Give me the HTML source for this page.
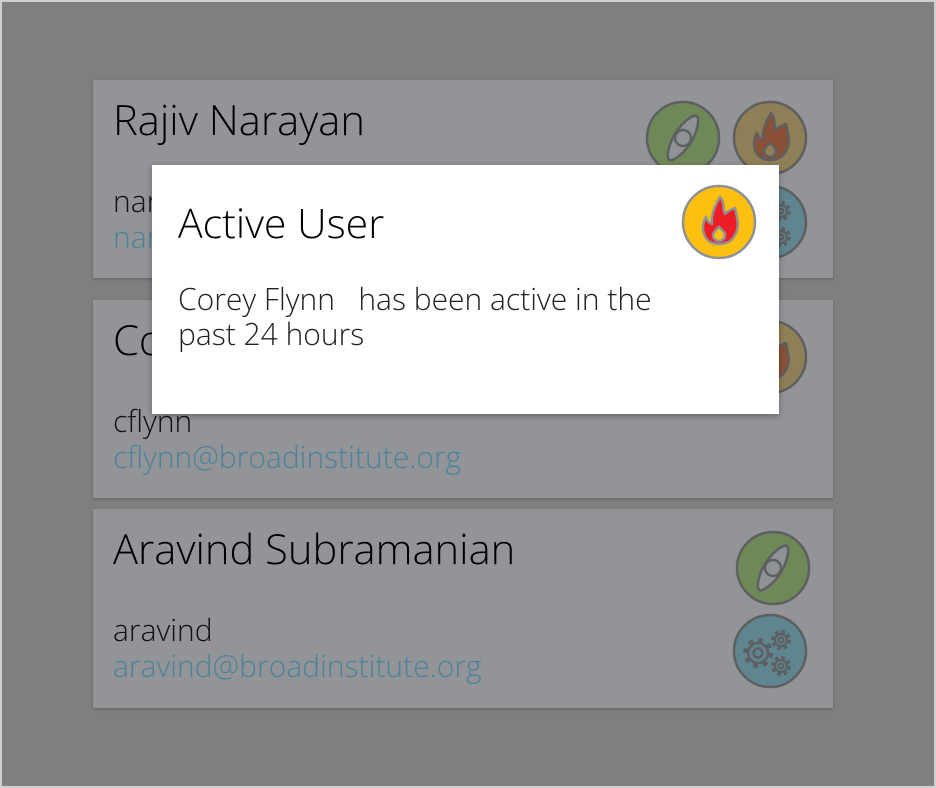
<!DOCTYPE html>
<html><head><meta charset="utf-8"><style>
html,body{margin:0;padding:0}
body{width:936px;height:788px;position:relative;overflow:hidden;background:#d0d0d0;font-family:"Open Sans","Liberation Sans",sans-serif}
.bg{position:absolute;left:2px;top:2px;width:932px;height:784px;background:#7f7f7f}
.card{position:absolute;left:93px;width:740px;background:#939498;box-shadow:0 1px 3px rgba(0,0,0,.25)}
.name{position:absolute;left:20px;top:11px;font-size:41.7px;color:#000;font-weight:300;white-space:nowrap}
.user{position:absolute;left:20px;font-size:30px;color:#111;font-weight:300}
.mail{position:absolute;left:20px;font-size:30px;color:#4a8399;font-weight:300}
.ic{position:absolute;width:76px;height:76px}
.modal{position:absolute;left:152px;top:165px;width:627px;height:249px;background:#fff;box-shadow:0 2px 6px rgba(0,0,0,.3)}
.mt{position:absolute;left:26px;top:30px;font-size:41px;color:#000;font-weight:300;white-space:nowrap}
.mb{position:absolute;left:26px;top:116px;font-size:30px;line-height:35px;color:#222;font-weight:300;width:480px}
</style></head><body>
<div class="bg"></div>
<svg width="0" height="0" style="position:absolute">
<defs>
<g id="compass"><path d="M38 29 C50 29 60 33 63 36 C64 37 64 39 63 40 C60 43 50 47 38 47 C26 47 16 43 13 40 C12 39 12 37 13 36 C16 33 26 29 38 29 Z" transform="rotate(-58 38 38)" fill="#8e9196" stroke="#5d5f60" stroke-width="2.5"/><circle cx="38" cy="38" r="8" fill="#8e9196" stroke="#5d5f60" stroke-width="2.5"/></g>
<g id="fire" stroke-width="2.5" stroke-linejoin="round"><path d="M39 13 C44 18 41 24 44 30 C47 27 51 25 54 24 C56 34 60 44 52 54 C46 62 30 62 25 54 C20 46 22 38 25 33 C26 37 28 39 31 40 C30 30 34 22 39 13 Z M38 43 C41 46 44 48 44 51 C44 55 41 57 38 57 C35 57 32 55 32 51 C32 48 35 46 38 43 Z" fill-rule="evenodd"/></g>
<g id="gear" fill="none" stroke="#5d5f60">
<circle cx="26" cy="40" r="12.5" stroke-width="5" stroke-dasharray="4.5 5.3"/>
<circle cx="26" cy="40" r="10" stroke-width="2.5"/><circle cx="26" cy="40" r="4.5" stroke-width="2.5"/>
<circle cx="49" cy="27" r="8" stroke-width="4" stroke-dasharray="3.5 2.8"/>
<circle cx="49" cy="27" r="6" stroke-width="2.2"/><circle cx="49" cy="27" r="2.5" stroke-width="2"/>
<circle cx="49" cy="53" r="8" stroke-width="4" stroke-dasharray="3.5 2.8"/>
<circle cx="49" cy="53" r="6" stroke-width="2.2"/><circle cx="49" cy="53" r="2.5" stroke-width="2"/>
</g>
</defs></svg>

<div class="card" style="top:80px;height:198px">
<div class="name">Rajiv Narayan</div>
<div class="user" style="top:100px">narayan</div>
<div class="mail" style="top:136px">narayan@broadinstitute.org</div>
<svg class="ic" style="left:552px;top:20px" viewBox="0 0 76 76"><circle cx="38" cy="38" r="36" fill="#6f8858" stroke="#5d5f60" stroke-width="2.5"/><use href="#compass"/></svg>
<svg class="ic" style="left:639px;top:20px" viewBox="0 0 76 76"><circle cx="38" cy="38" r="36" fill="#8f7f57" stroke="#5d5f60" stroke-width="2.5"/><use href="#fire" fill="#8c4f38" stroke="#5d5f60"/></svg>
<svg class="ic" style="left:639px;top:104px" viewBox="0 0 76 76"><circle cx="38" cy="38" r="36" fill="#5f8690" stroke="#5d5f60" stroke-width="2.5"/><use href="#gear"/></svg>
</div>

<div class="card" style="top:300px;height:198px">
<div class="name">Corey Flynn</div>
<div class="user" style="top:100px">cflynn</div>
<div class="mail" style="top:136px">cflynn@broadinstitute.org</div>
<svg class="ic" style="left:639px;top:19px" viewBox="0 0 76 76"><circle cx="38" cy="38" r="36" fill="#8f7f57" stroke="#5d5f60" stroke-width="2.5"/><use href="#fire" fill="#8c4f38" stroke="#5d5f60"/></svg>
</div>

<div class="card" style="top:509px;height:199px">
<div class="name">Aravind Subramanian</div>
<div class="user" style="top:100px">aravind</div>
<div class="mail" style="top:136px">aravind@broadinstitute.org</div>
<svg class="ic" style="left:642px;top:21px" viewBox="0 0 76 76"><circle cx="38" cy="38" r="36" fill="#6f8858" stroke="#5d5f60" stroke-width="2.5"/><use href="#compass"/></svg>
<svg class="ic" style="left:639px;top:104px" viewBox="0 0 76 76"><circle cx="38" cy="38" r="36" fill="#5f8690" stroke="#5d5f60" stroke-width="2.5"/><use href="#gear"/></svg>
</div>

<div class="modal">
<div class="mt">Active User</div>
<div class="mb">Corey Flynn&nbsp;&nbsp; has been active in the past 24 hours</div>
<svg class="ic" style="left:529px;top:19px" viewBox="0 0 76 76"><circle cx="38" cy="38" r="36" fill="#fdc010" stroke="#8e9196" stroke-width="2.5"/><use href="#fire" fill="#ee1c25" stroke="#8e9196"/></svg>
</div>
</body></html>
